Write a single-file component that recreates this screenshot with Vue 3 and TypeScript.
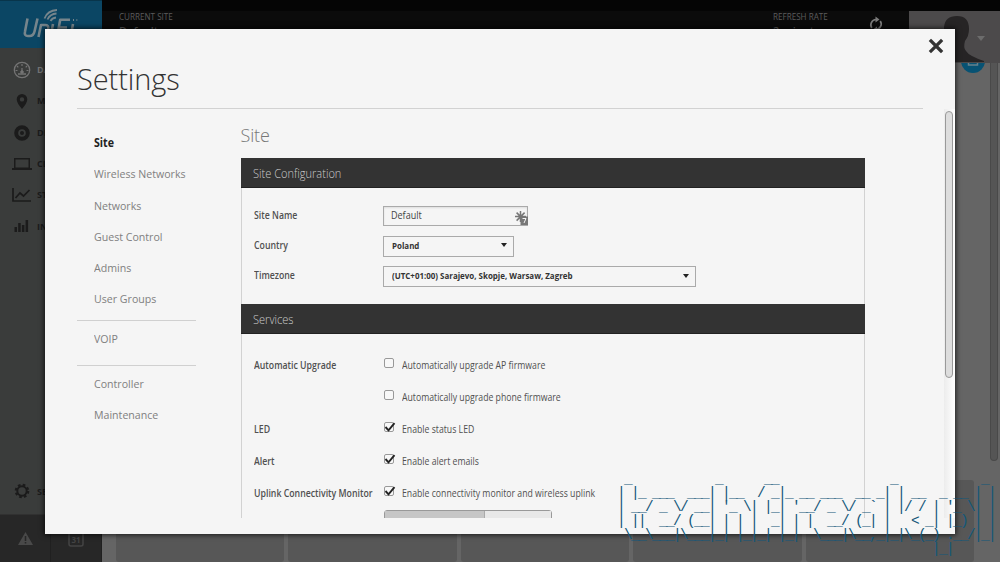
<script setup lang="ts">
interface NavItem { label: string; active?: boolean }

const navGroups: NavItem[][] = [
  [
    { label: 'Site', active: true },
    { label: 'Wireless Networks' },
    { label: 'Networks' },
    { label: 'Guest Control' },
    { label: 'Admins' },
    { label: 'User Groups' },
  ],
  [{ label: 'VOIP' }],
  [{ label: 'Controller' }, { label: 'Maintenance' }],
]

const services = [
  { label: 'Automatic Upgrade', text: 'Automatically upgrade AP firmware', on: false },
  { label: '', text: 'Automatically upgrade phone firmware', on: false },
  { label: 'LED', text: 'Enable status LED', on: true },
  { label: 'Alert', text: 'Enable alert emails', on: true },
  { label: 'Uplink Connectivity Monitor', text: 'Enable connectivity monitor and wireless uplink', on: true },
]

const banner: string = [
  ' _            _      __                _            _',
  '| |_ ___  ___| |__  / _|_ __ ___  __ _| | __  _ __ | |',
  "| __/ _ \\/ __| '_ \\| |_| '__/ _ \\/ _` | |/ / | '_ \\| |",
  '| ||  __/ (__| | | |  _| | |  __/ (_| |   < _| |_) | |',
  ' \\__\\___|\\___|_| |_|_| |_|  \\___|\\__,_|_|\\_(_) .__/|_|',
  '                                             |_|',
].join('\n')
</script>

<template>
  <div class="screen">
    <div class="backdrop">
      <aside class="sidebar">
        <div class="logo">
          <svg width="102" height="48" viewBox="0 0 102 48" fill="none" stroke="#76858c">
            <g stroke-width="2.600" stroke-linejoin="round">
              <path d="M27.500 17.500l-2.500 13q-1 4.500 3 4.500h1.500q4 0 5-4.500l3-13M38.500 36l2.500-12h4q4 0 3.200 4l-1.500 8M53 23l-2.500 13M57 36l3.200-17.200H70M59 26.500h8M73 23l-2.500 13" />
            </g>
            <path d="M44.500 17.500q3-8 12.500-8.500M47.500 18.500q2.500-5.500 9-6M50.500 20q1.500-3 5.500-3.500" stroke-width="1.800" />
            <path d="M73.500 18v2M76 19h1.500" />
          </svg>
        </div>
        <nav class="side-nav">
          <div class="side-item current">
            <svg width="20" height="18" viewBox="0 0 20 18" fill="none" stroke="currentColor"><circle cx="10" cy="9" r="7.700" stroke-width="1.300"/><path d="M10 3v2M5 5l1.300 1.300M15 5l-1.300 1.300M3.500 9.500h2M14.500 9.500h2M10 7v4" stroke-width="1.200"/><path d="M6 13h8" stroke-width="1.500"/><circle cx="10" cy="11" r="1.300" fill="currentColor"/></svg><span>DASHBOARD</span>
          </div>
          <div class="side-item">
            <svg width="20" height="18" viewBox="0 0 20 18"><path d="M10 2a5.300 5.300 0 0 0-5.300 5.300Q4.700 11 10 17q5.300-6 5.300-9.700A5.300 5.300 0 0 0 10 2zm0 3.200a2.200 2.200 0 1 1 0 4.400 2.200 2.200 0 0 1 0-4.400z" fill="currentColor" fill-rule="evenodd"/></svg><span>MAP</span>
          </div>
          <div class="side-item">
            <svg width="20" height="18" viewBox="0 0 20 18" fill="none" stroke="currentColor"><circle cx="10" cy="10" r="5.800" stroke-width="4"/><circle cx="10" cy="10" r="2" fill="currentColor" stroke="none"/></svg><span>DEVICES</span>
          </div>
          <div class="side-item">
            <svg width="20" height="18" viewBox="0 0 20 18"><path d="M2 3h16v10h2v2H0v-2h2zm1.500 1.500v8h13v-8z" fill="currentColor" fill-rule="evenodd"/></svg><span>CLIENTS</span>
          </div>
          <div class="side-item">
            <svg width="20" height="18" viewBox="0 0 20 18" fill="none" stroke="currentColor" stroke-width="1.700"><path d="M1 2v13h18M3.500 12l4.500-5 3.500 3L17.500 4"/></svg><span>STATISTICS</span>
          </div>
          <div class="side-item">
            <svg width="20" height="18" viewBox="0 0 20 18" fill="currentColor"><path d="M2.500 10h2.500v5H2.500zM6.200 6h2.500v9H6.200zM9.900 8h2.500v7H9.900zM13.600 3h2.500v12h-2.500z"/></svg><span>INSIGHTS</span>
          </div>
          <div class="side-item settings">
            <svg width="20" height="18" viewBox="0 0 20 18" fill="none" stroke="currentColor"><circle cx="10" cy="9" r="4.700" stroke-width="2"/><circle cx="10" cy="9" r="6.200" stroke-width="2.200" stroke-dasharray="2.600 2.270"/></svg><span>SETTINGS</span>
          </div>
        </nav>
        <div class="side-foot">
          <div><svg width="17" height="15" viewBox="0 0 17 15"><path d="M8.500 1L16 14H1z" fill="#494949"/><path d="M8.500 5v5M8.500 11v1.500" stroke="#272727" stroke-width="1.500"/></svg></div>
          <div><svg width="16" height="16" viewBox="0 0 16 16"><rect x="1" y="1" width="14" height="14" rx="2" fill="none" stroke="#444" stroke-width="1.500"/><text x="3.500" y="11.500" font-size="8" font-family="Open Sans" font-weight="700" fill="#444">31</text></svg></div>
        </div>
      </aside>
      <div class="main">
        <header class="topbar">
          <div class="site"><small>CURRENT SITE</small><b>Default</b></div>
          <div class="refresh"><small>REFRESH RATE</small><b>2 minutes</b></div>
          <svg class="reload" width="16" height="16" viewBox="0 0 16 16" fill="none" stroke="#7a7a7a" stroke-width="1.700"><path d="M3.800 12A5.400 5.400 0 0 1 8 3.500M12.200 5A5.400 5.400 0 0 1 8 13.500"/><path d="M7.500 .5l4 3-4 3zM9 10.500l-4 3L9 16.500z" fill="#7a7a7a" stroke="none"/></svg>
          <div class="avatar">
            <svg width="91" height="51" viewBox="0 0 91 51"><path d="M35 16Q36 5 48 5t12 13q0 7-4 12-2 7 1 10 3 5 18 10v1H35z" fill="#262425"/><path d="M68 25h8l-4 5z" fill="#6c6c6c"/></svg>
          </div>
        </header>
        <div class="round"><svg width="24" height="24" viewBox="0 0 24 24" fill="none" stroke="#67818c" stroke-width="1.500"><path d="M7.500 9v7h9V9M10 12h4"/></svg></div>
        <div class="cards"><i></i><i></i><i></i><i></i><i class="last"></i></div>
        <div class="page-scroll"></div>
      </div>
    </div>

    <section class="modal">
      <div class="modal-head">
        <h1>Settings</h1>
      </div>
      <svg class="close" width="16" height="16" viewBox="0 0 16 16"><path d="M3 3l10 10M13 3L3 13" stroke="#333" stroke-width="3.200" stroke-linecap="square"/></svg>
      <div class="modal-body">
        <nav class="menu">
          <ul v-for="(group, i) in navGroups" :key="i">
            <li v-for="item in group" :key="item.label" :class="{ active: item.active }"><span>{{ item.label }}</span></li>
          </ul>
        </nav>
        <div class="content">
          <h2>Site</h2>
          <h3><span>Site Configuration</span></h3>
          <div class="panel config">
            <div class="field"><label><span>Site Name</span></label>
              <div class="input"><span>Default</span>
                <svg width="13" height="14" viewBox="0 0 13 14"><path d="M5.500 0v11M0 5.500h11M1.600 1.600l8 8M9.600 1.600l-8 8" stroke="#777" stroke-width="1.500"/><path d="M5.500 5.500h7.500v8.500H5.500z" fill="#777"/><path d="M7.500 7.500h3.500l-2 4.500" fill="none" stroke="#f5f5f5"/></svg>
              </div>
            </div>
            <div class="field"><label><span>Country</span></label><div class="select short"><span>Poland</span><i></i></div></div>
            <div class="field"><label><span>Timezone</span></label><div class="select long"><span>(UTC+01:00) Sarajevo, Skopje, Warsaw, Zagreb</span><i></i></div></div>
          </div>
          <h3><span>Services</span></h3>
          <div class="panel services">
            <div v-for="s in services" :key="s.text" class="service">
              <label><span>{{ s.label }}</span></label>
              <span class="box"><svg v-if="s.on" width="13" height="12" viewBox="0 0 13 12"><path d="M2.500 5l3 3.300L11.500 1.200" fill="none" stroke="#222" stroke-width="1.900"/></svg></span>
              <span class="text">{{ s.text }}</span>
            </div>
            <div class="segmented"><i></i><i></i></div>
          </div>
        </div>
      </div>
      <div class="track"><div class="thumb"></div></div>
    </section>
    <pre class="banner">{{ banner }}</pre>
  </div>
</template>

<style>
body { overflow: hidden; }
</style>

<style scoped>
.screen { position: relative; width: 1000px; height: 562px; overflow: hidden; font-family: "Open Sans", "Noto Sans", sans-serif; }
.screen * { box-sizing: border-box; }
.backdrop { display: flex; height: 562px; background: #656565; }
.sidebar { display: flex; flex-direction: column; width: 102px; background: #3a3c3b; }
.logo { height: 48px; background: #0b4664; border-top: 1px solid #08354b; }
.logo svg { display: block; }
.side-nav { flex: 1; padding-top: 6px; }
.side-item { display: flex; align-items: center; gap: 5px; height: 31.300px; padding-left: 12px; color: #1b1b1b; font-size: 9px; font-weight: 700; }
.side-item svg { flex: none; }
.side-item.current { color: #747474; }
.side-item.settings { margin-top: 234px; }
.side-foot { display: flex; height: 48px; background: #272727; border-top: 1px solid #313131; }
.side-foot div { flex: 1; display: flex; align-items: center; justify-content: center; border-right: 1px solid #202020; }
.main { position: relative; flex: 1; display: flex; flex-direction: column; }
.topbar { display: flex; height: 63px; background: linear-gradient(#050505 0 11px, #0b0b0b 11px); color: #5b5b5b; }
.topbar small { display: block; font-size: 8.800px; line-height: 12px; transform: scaleX(.92); transform-origin: 0 50%; }
.topbar b { display: block; font-size: 11px; line-height: 15px; font-weight: 600; }
.site { padding: 11px 0 0 17px; width: 671px; }
.refresh { padding-top: 11px; width: 95px; }
.reload { margin-top: 16px; width: 16px; }
.avatar { margin: 11px 0 0 auto; width: 91px; height: 52px; background: #4c4a4b; }
.round { position: absolute; left: 859px; top: 49px; width: 24px; height: 24px; border-radius: 50%; background: #075273; clip-path: inset(14px 0 0 0); }
.cards { margin-top: auto; display: flex; gap: 4px; height: 82px; padding-left: 14px; width: 872px; }
.cards i { flex: 1; background: #575757; border-radius: 3px; }
.page-scroll { position: absolute; right: 2px; top: 63px; width: 8px; height: 398px; background: #555; border: 1px solid #494949; border-top: 0; border-radius: 0 0 4px 4px; }

.modal { position: absolute; left: 44.500px; top: 28.500px; width: 910.500px; height: 505.500px; background: #f5f5f5; box-shadow: 0 0 5px 1px rgba(0, 0, 0, .7); }
.modal-head { margin-left: 32.500px; width: 846px; height: 80px; border-bottom: 1px solid #d2d2d2; }
h1, h2, h3, ul { margin: 0; padding: 0; }
h1 { padding-top: 30px; font-size: 29px; line-height: 40px; font-weight: 300; color: #333; letter-spacing: -.1px; }
.close { position: absolute; left: 883.500px; top: 9.500px; }
.modal-body { display: flex; height: 409px; overflow: hidden; margin-left: 32.500px; }
.menu { width: 119px; padding-top: 18.500px; }
.menu ul { list-style: none; padding-left: 17px; }
.menu li { height: 31.250px; line-height: 31.250px; font-size: 11.600px; color: #808080; white-space: nowrap; }
.menu li span, h3 span, label span, .input span, .select span { display: inline-block; transform-origin: 0 50%; }
.menu li span { transform: scaleX(.915); }
.menu li.active { color: #222; font-weight: 700; }
.menu ul + ul { border-top: 1px solid #d0d0d0; padding-top: 2px; }
.menu ul:nth-child(1) { height: 192.500px; }
.menu ul:nth-child(2) { height: 45px; }
.content { margin-left: 44.500px; width: 624px; }
h2 { height: 49.500px; padding-top: 13px; font-size: 18px; line-height: 26px; font-weight: 300; color: #777; letter-spacing: -.15px; }
h3 { height: 30px; padding-left: 12px; background: #333; border-bottom: 1px solid #222; color: #ccc; font-size: 12px; line-height: 32px; font-weight: 300; }
h3 span { transform: scaleX(.92); }
.services-title { line-height: 33px; }
.panel { border: 1px solid #d2d2d2; border-width: 0 1px; }
.config { height: 116px; padding-top: 17.500px; }
.field { display: flex; height: 30.400px; padding-left: 12px; }
label { width: 129.500px; flex: none; font-size: 10.300px; line-height: 18px; font-weight: 600; color: #505050; white-space: nowrap; }
label span { transform: scaleX(.85); }
.input { position: relative; width: 145px; height: 20px; border: 1px solid #aaa; padding-left: 7px; font-size: 10.500px; line-height: 16px; color: #444; box-shadow: inset 0 1px 2px #ddd; }
.input span { transform: scaleX(.86); }
.input svg { position: absolute; right: -1px; top: 4px; }
.select { display: flex; align-items: center; justify-content: space-between; height: 21px; border: 1px solid #aaa; padding: 0 6px 2px 8px; font-size: 9.200px; font-weight: 700; color: #333; white-space: nowrap; }
.select span { transform: scaleX(.865); }
.select i { border: 3.500px solid transparent; border-top: 4.500px solid #222; border-bottom: 0; }
.short { width: 131px; }
.long { width: 313px; }
.services { height: 300px; padding-top: 14.500px; }
.service { display: flex; height: 32px; padding-left: 12px; align-items: center; }
.box { flex: none; width: 10px; height: 10px; margin: -4px 8px 0 1px; border: 1px solid #999; border-radius: 2px; background: #f8f8f8; }
.box svg { display: block; margin: -1px 0 0 -2px; }
.text { font-size: 10px; color: #505050; white-space: nowrap; transform: scaleX(.87); transform-origin: 0 50%; }
.segmented { display: flex; margin: 1px 0 0 142.500px; width: 168px; height: 24px; border: 1px solid #999; border-radius: 3px; }
.segmented i:first-child { width: 100px; background: #c6c6c6; border-right: 1px solid #aaa; }
.segmented i:last-child { flex: 1; background: #e8e8e8; }
.track { position: absolute; right: 0; top: 80px; width: 11px; height: 409px; background: linear-gradient(90deg, #ececec, #fff); }
.thumb { margin: 2px 0 0 1px; width: 8px; height: 267px; background: #ddd; border: 1px solid #999; border-radius: 4px; }
.banner { position: absolute; left: 617px; top: 471.500px; margin: 0; font: 14.500px/14px "Liberation Mono", monospace; letter-spacing: -1.702px; color: #12577a; }
</style>
